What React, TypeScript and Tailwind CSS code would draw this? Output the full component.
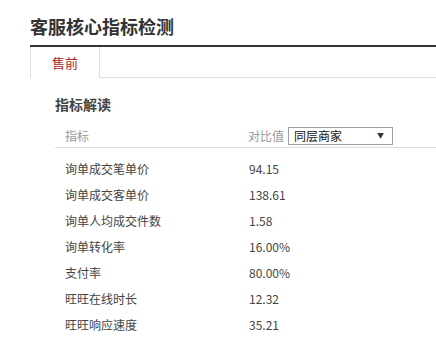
import React from "react";

const rows: [string, string][] = [
  ["询单成交笔单价", "94.15"],
  ["询单成交客单价", "138.61"],
  ["询单人均成交件数", "1.58"],
  ["询单转化率", "16.00%"],
  ["支付率", "80.00%"],
  ["旺旺在线时长", "12.32"],
  ["旺旺响应速度", "35.21"],
];

export default function App() {
  return (
    <div
      className="w-[436px] h-[362px] bg-white overflow-hidden pl-[30px] text-[#333]"
      style={{ fontFamily: '"Noto Sans CJK SC", "Noto Sans", sans-serif' }}
    >
      <div className="pt-[14px] h-[45px] text-[18px] font-bold leading-[24px] text-[#333]">
        客服核心指标检测
      </div>
      <div className="h-[2px] bg-[#333]" />
      <div className="flex h-[31px]">
        <div className="w-[70px] border-l border-r border-[#ddd] bg-white flex items-center justify-center text-[13px] text-[#a8262c]">
          售前
        </div>
        <div className="flex-1 border-b border-[#ddd]" />
      </div>
      <div className="pl-[25px]">
        <div className="pt-[16px] h-[46px] text-[14px] font-bold leading-[20px] text-[#444]">
          指标解读
        </div>
        <div className="flex items-center h-[24px] border-b border-[#ddd] text-[12px]">
          <div className="w-[193px] pl-[10px] text-[#999]">指标</div>
          <div className="text-[#999] mr-[4px]">对比值</div>
          <div className="w-[105px] h-[18px] border border-[#a0a0a0] flex items-center justify-between pl-[5px] pr-[8px] text-[12px] text-[#111]">
            <span>同层商家</span>
            <span className="text-[7px] text-[#333]">▼</span>
          </div>
        </div>
        <div className="pt-[8px]">
          {rows.map(([k, v]) => (
            <div key={k} className="flex items-center h-[26px] text-[12px] text-[#444]">
              <div className="w-[194px] pl-[10px]">{k}</div>
              <div>{v}</div>
            </div>
          ))}
        </div>
      </div>
    </div>
  );
}
